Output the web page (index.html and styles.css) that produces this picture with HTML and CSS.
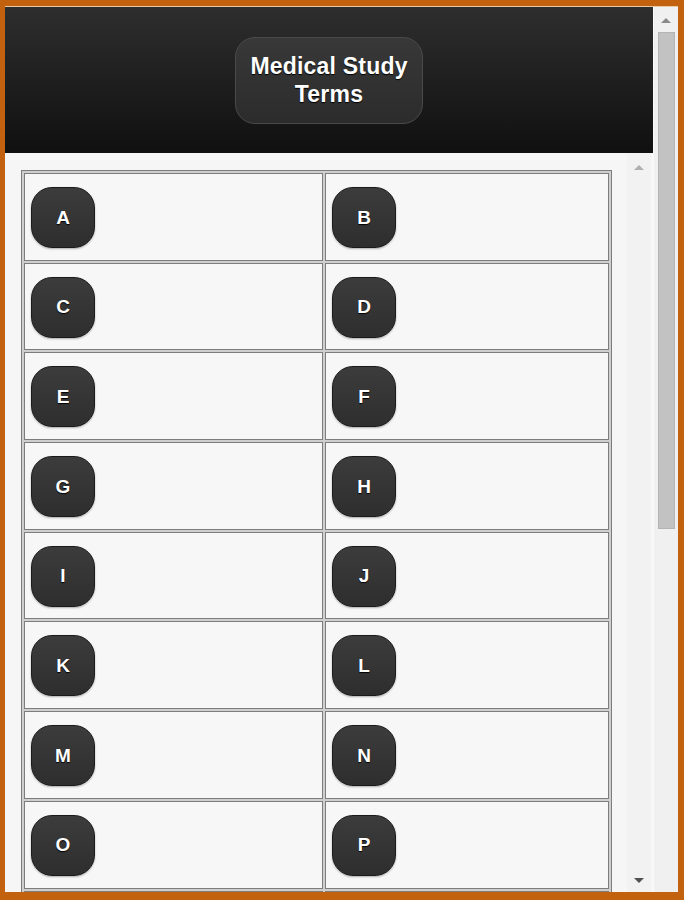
FILE: index.html
```html
<!DOCTYPE html>
<html lang="en">
<head>
  <meta charset="UTF-8">
  <meta name="viewport" content="width=device-width, initial-scale=1.0">
  <title>Medical Study Terms</title>
  <link rel="stylesheet" href="styles.css">
</head>
<body>

  <div class="frame">
    <div class="main">
      <div class="header">
        <div class="title-button">Medical Study<br>Terms</div>
      </div>

      <div class="content">
        <div class="list-area">
          <div class="letter-grid" id="letterGrid"></div>
        </div>
        <div class="inner-scroll">
          <span class="arrow-up light"></span>
          <span class="arrow-down"></span>
        </div>
      </div>
    </div>

    <div class="outer-scroll">
      <span class="arrow-up"></span>
      <div class="thumb"></div>
    </div>
  </div>

  <script>
    // Build one cell per letter that fits in the view
    const grid = document.getElementById("letterGrid");
    const letters = "ABCDEFGHIJKLMNOP".split("");

    letters.forEach(function (letter) {
      const cell = document.createElement("div");
      cell.className = "cell";
      cell.innerHTML = '<button class="letter-button">' + letter + '</button>';
      grid.appendChild(cell);
    });

    // The next row only peeks in at the bottom edge
    for (let i = 0; i < 2; i++) {
      const cell = document.createElement("div");
      cell.className = "cell";
      grid.appendChild(cell);
    }
  </script>

</body>
</html>
```

FILE: styles.css
```css
html, body {
  margin: 0;
  padding: 0;
}
body {
  font-family: 'Liberation Sans', Arial, sans-serif;
  background-color: #c2620e;
}
.frame {
  display: flex;
  width: 684px;
  height: 900px;
  box-sizing: border-box;
  border-style: solid;
  border-color: #c2620e;
  border-width: 6px 6px 8px 5px;
  box-shadow: inset 0 1px 0 #e8c9a0;
}
.main {
  flex: 1;
  display: flex;
  flex-direction: column;
  min-width: 0;
  margin-top: 1px;
}
.header {
  height: 146px;
  display: flex;
  align-items: center;
  justify-content: center;
  background: linear-gradient(#2e2e2e, #101010);
  flex-shrink: 0;
}
.title-button {
  width: 188px;
  height: 87px;
  box-sizing: border-box;
  display: flex;
  align-items: center;
  justify-content: center;
  text-align: center;
  background: linear-gradient(#383838, #2c2c2c);
  border: 1px solid #4a4a4a;
  border-radius: 20px;
  color: #fff;
  font-weight: bold;
  font-size: 23px;
  line-height: 28px;
  letter-spacing: 0.2px;
  text-shadow: 0 1px 1px #000;
}
.content {
  flex: 1;
  display: flex;
  background-color: #f6f6f6;
  overflow: hidden;
}
.list-area {
  flex: 1;
  padding: 17px 0 0 16px;
  overflow: hidden;
}
.letter-grid {
  display: grid;
  grid-template-columns: 299px 284px;
  grid-auto-rows: 87.7px;
  gap: 2px;
  padding: 2px;
  width: max-content;
  border: 1px solid #7d7d7d;
  background-color: #cfcfcf;
}
.cell {
  box-sizing: border-box;
  border: 1px solid #7d7d7d;
  background-color: #f7f7f7;
  padding: 13px 0 0 6px;
}
.letter-button {
  width: 64px;
  height: 61px;
  border: 1px solid #1a1a1a;
  border-radius: 21px;
  background: linear-gradient(#3c3c3c, #2e2e2e);
  color: #fff;
  font-family: 'Liberation Sans', Arial, sans-serif;
  font-weight: bold;
  font-size: 19px;
  text-shadow: 0 1px 1px #000;
  box-shadow: 0 1px 2px rgba(0, 0, 0, 0.3);
  cursor: pointer;
}
.inner-scroll {
  width: 24px;
  margin-right: 2px;
  display: flex;
  flex-direction: column;
  justify-content: space-between;
  align-items: center;
  padding: 12px 0 9px;
  background-color: #f2f2f2;
}
.outer-scroll {
  width: 25px;
  display: flex;
  flex-direction: column;
  align-items: center;
  padding-top: 11px;
  box-sizing: border-box;
  background-color: #f0f0f0;
  border-left: 1px solid #fafafa;
  margin-top: 1px;
}
.arrow-up,
.arrow-down {
  width: 0;
  height: 0;
  border-left: 5px solid transparent;
  border-right: 5px solid transparent;
}
.arrow-up {
  border-bottom: 5px solid #8a8a8a;
}
.arrow-up.light {
  border-bottom-color: #b0b0b0;
}
.arrow-down {
  border-top: 5px solid #505050;
}
.thumb {
  width: 17px;
  height: 497px;
  margin-top: 9px;
  box-sizing: border-box;
  background-color: #c2c2c2;
  border: 1px solid #b4b4b4;
}
```
